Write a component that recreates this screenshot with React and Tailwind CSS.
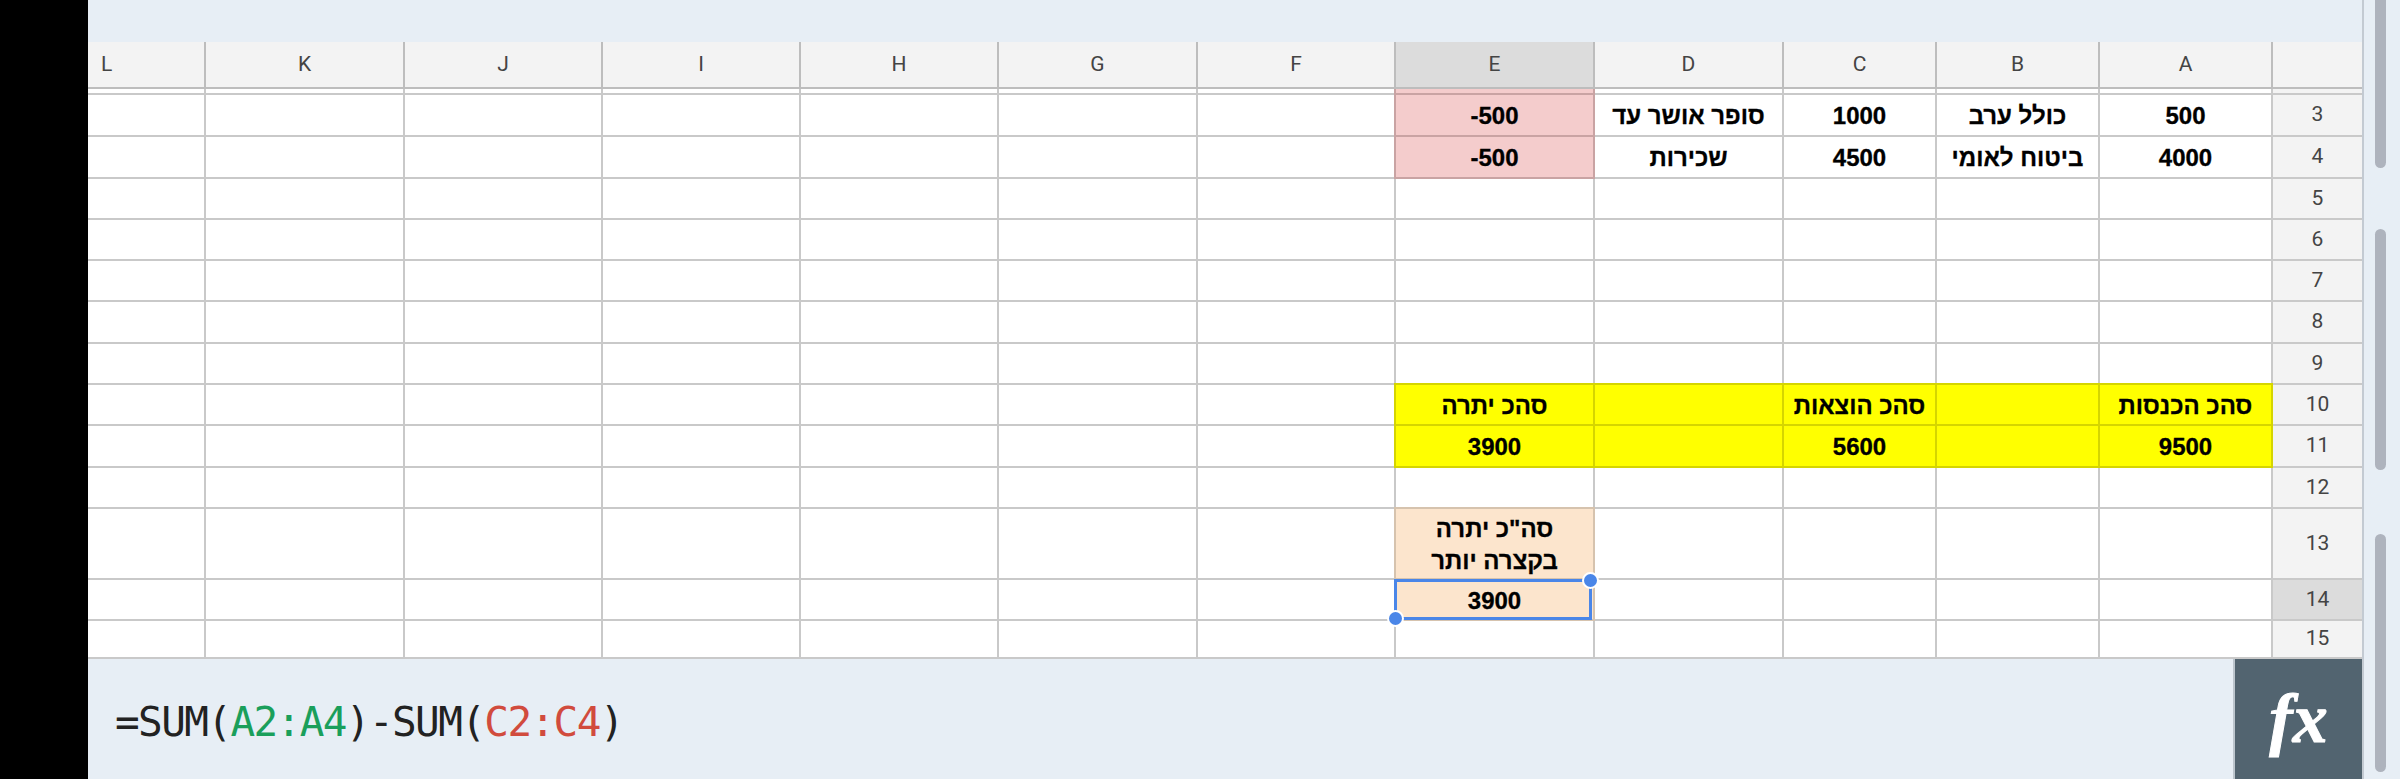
const cols = [
  { id: "L", w: "w-[118px]" },
  { id: "K", w: "w-[199px]" },
  { id: "J", w: "w-[198px]" },
  { id: "I", w: "w-[198px]" },
  { id: "H", w: "w-[198px]" },
  { id: "G", w: "w-[199px]" },
  { id: "F", w: "w-[198px]" },
  { id: "E", w: "w-[199px]" },
  { id: "D", w: "w-[189px]" },
  { id: "C", w: "w-[153px]" },
  { id: "B", w: "w-[163px]" },
  { id: "A", w: "w-[173px]" },
];

const pinkE = "bg-[#f4cccc] border-[#c9a3a3] shadow-[-2px_0_0_#c9a3a3]";
const yellowTop = "bg-[#ffff00] border-[#d5d500] shadow-[0_-2px_0_#d5d500]";
const yellowTopE = "bg-[#ffff00] border-[#d5d500] shadow-[0_-2px_0_#d5d500,-2px_0_0_#d5d500,-2px_-2px_0_#d5d500]";
const yellow = "bg-[#ffff00] border-[#d5d500]";
const yellowE = "bg-[#ffff00] border-[#d5d500] shadow-[-2px_0_0_#d5d500]";
const peach = "bg-[#fce5cd] border-[#d6c3ae] shadow-[-2px_0_0_#d6c3ae,0_-2px_0_#d6c3ae,-2px_-2px_0_#d6c3ae]";
const peachPlain = "bg-[#fce5cd] border-[#d6c3ae]";

const rows = [
  { n: "", h: "h-[6px]", cells: { E: { cls: pinkE } } },
  { n: "3", h: "h-[42px]", cells: { A: { t: "500" }, B: { t: "כולל ערב" }, C: { t: "1000" }, D: { t: "סופר אושר עד" }, E: { t: "-500", cls: pinkE } } },
  { n: "4", h: "h-[42px]", cells: { A: { t: "4000" }, B: { t: "ביטוח לאומי" }, C: { t: "4500" }, D: { t: "שכירות" }, E: { t: "-500", cls: pinkE } } },
  { n: "5", h: "h-[41px]", cells: {} },
  { n: "6", h: "h-[41px]", cells: {} },
  { n: "7", h: "h-[41px]", cells: {} },
  { n: "8", h: "h-[42px]", cells: {} },
  { n: "9", h: "h-[41px]", cells: {} },
  { n: "10", h: "h-[41px]", cells: { A: { t: "סהכ הכנסות", cls: yellowTop }, B: { cls: yellowTop }, C: { t: "סהכ הוצאות", cls: yellowTop }, D: { cls: yellowTop }, E: { t: "סהכ יתרה", cls: yellowTopE } } },
  { n: "11", h: "h-[42px]", cells: { A: { t: "9500", cls: yellow }, B: { cls: yellow }, C: { t: "5600", cls: yellow }, D: { cls: yellow }, E: { t: "3900", cls: yellowE } } },
  { n: "12", h: "h-[41px]", cells: {} },
  { n: "13", h: "h-[71px]", cells: { E: { t: "סה\"כ יתרה בקצרה יותר", cls: peach, wrap: true } } },
  { n: "14", h: "h-[41px]", active: true, cells: { E: { t: "3900", cls: peachPlain, selected: true } } },
  { n: "15", h: "h-[38px]", cells: {} },
];

function Cell({ col, cell, h }) {
  const cls = cell?.cls ?? "bg-white border-[#c9c9c9]";
  return (
    <div
      className={`${col.w} ${h} ${cls} relative shrink-0 box-border border-r-2 border-b-2 flex items-center justify-center text-center text-[24px] font-bold text-black [-webkit-text-stroke:0.3px_black] font-['Liberation_Sans',Arial,sans-serif] ${cell?.wrap ? "leading-[32px] px-4" : "leading-none"} ${cell?.selected ? "z-10" : ""}`}
    >
      {cell?.t && <span dir="auto" className="relative top-[1px]">{cell.t}</span>}
      {cell?.selected && (
        <div className="absolute left-[-2px] top-[-1px] w-[198px] h-[41px] box-border border-[3px] border-[#4a86e8]">
          <div className="absolute right-[-10px] top-[-10px] w-[17px] h-[17px] rounded-full bg-[#4a86e8] border-2 border-white" />
          <div className="absolute left-[-10px] bottom-[-10px] w-[17px] h-[17px] rounded-full bg-[#4a86e8] border-2 border-white" />
        </div>
      )}
    </div>
  );
}

function Row({ row }) {
  return (
    <div className="flex">
      {cols.map((c) => (
        <Cell key={c.id} col={c} cell={row.cells[c.id]} h={row.h} />
      ))}
      <div
        className={`w-[89px] ${row.h} box-border border-b-2 border-[#c9c9c9] flex items-center justify-center text-[21px] text-[#444] font-['Roboto',sans-serif] ${row.active ? "bg-[#dcdcdc]" : "bg-[#f3f3f3]"}`}
      >
        {row.n}
      </div>
    </div>
  );
}

export default function App() {
  return (
    <div className="flex w-[2400px] h-[779px] overflow-hidden bg-[#e7eef5]">
      <div className="w-[88px] shrink-0 bg-black" />
      <div className="w-[2276px] shrink-0 flex flex-col border-r-2 border-[#c3cad2]">
        <div className="h-[42px] bg-[#e7eef5]" />
        <div className="flex h-[47px]">
          {cols.map((c) => (
            <div
              key={c.id}
              className={`${c.w} shrink-0 box-border border-r-2 border-b-2 border-[#bdbdbd] flex items-center text-[21px] text-[#444] font-['Roboto',sans-serif] ${c.id === "L" ? "justify-start pl-[13px]" : "justify-center"} ${c.id === "E" ? "bg-[#dcdcdc]" : "bg-[#f3f3f3]"}`}
            >
              {c.id}
            </div>
          ))}
          <div className="w-[89px] box-border border-b-2 border-[#bdbdbd] bg-[#f3f3f3]" />
        </div>
        {rows.map((r) => (
          <Row key={r.n || "strip"} row={r} />
        ))}
        <div className="flex-1 flex">
          <div className="flex-1 flex items-center pl-[27px] text-[41px] tracking-[-1.6px] leading-none text-[#222] font-['DejaVu_Sans_Mono',monospace] font-normal">
            <span className="relative top-[3px]">
              =SUM(<span className="text-[#1a9f5b]">A2:A4</span>)-SUM(<span className="text-[#d14b3d]">C2:C4</span>)
            </span>
          </div>
          <div className="w-[129px] border-l-2 border-[#bcc5cd] bg-[#526470] flex items-center justify-center">
            <span className="text-white italic font-bold text-[70px] leading-none [-webkit-text-stroke:1px_white] font-['Liberation_Serif',serif]">fx</span>
          </div>
        </div>
      </div>
      <div className="flex-1 flex flex-col pl-[11px] pr-[14px]">
        <div className="h-[168px] rounded-b-lg bg-[#aeb3bd]" />
        <div className="h-[241px] mt-[61px] rounded-lg bg-[#aeb3bd]" />
        <div className="h-[238px] mt-[64px] rounded-lg bg-[#aeb3bd]" />
      </div>
    </div>
  );
}
